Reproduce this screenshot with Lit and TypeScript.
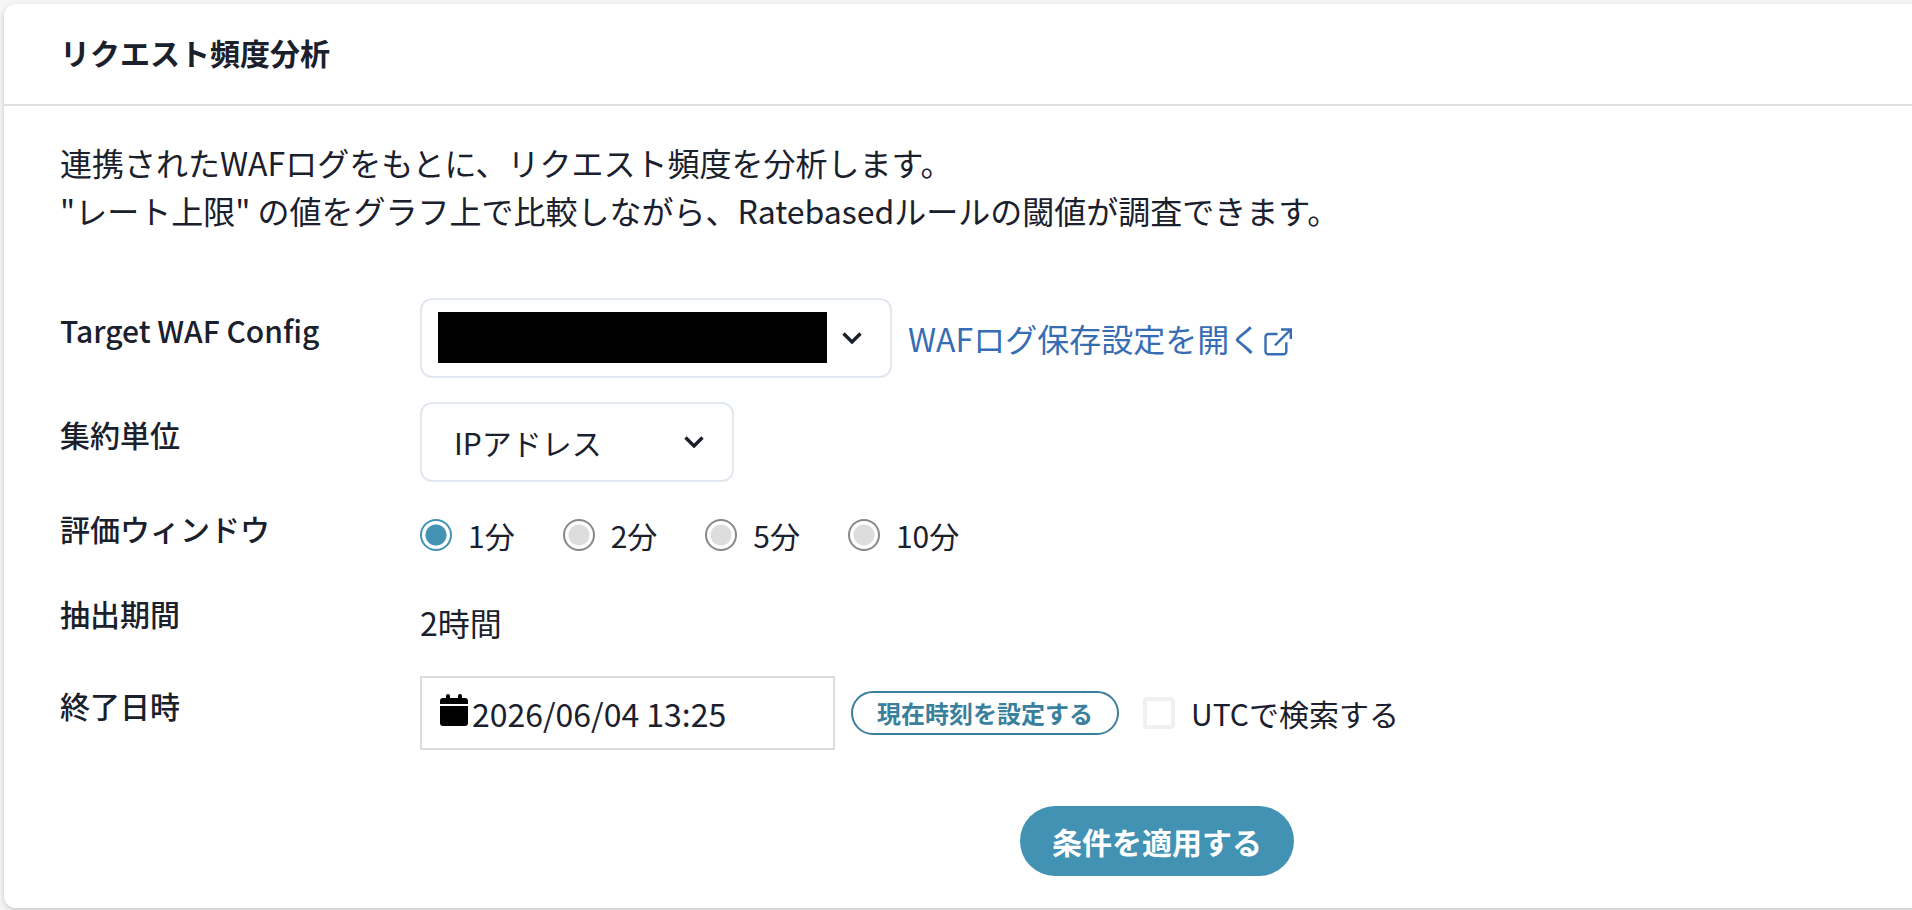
import { LitElement, html, css, svg } from "lit";
import { customElement, state } from "lit/decorators.js";

const chevron = html`<svg class="chevron" viewBox="0 0 20 12" aria-hidden="true">
  <path d="M1.5 1.5 10 10 18.5 1.5" fill="none" stroke="currentColor" stroke-width="3.4" />
</svg>`;

const calendarShapes = svg`
  <path d="M3 4H6V2A2 2 0 0 1 10 2V4H18V2A2 2 0 0 1 22 2V4H25A3 3 0 0 1 28 7V10H0V7A3 3 0 0 1 3 4Z" />
  <path d="M0 12H28V29A3 3 0 0 1 25 32H3A3 3 0 0 1 0 29Z" />`;

@customElement("app-root")
export class AppRoot extends LitElement {
  @state() private windowMinutes = 1;

  static styles = css`
    :host {
      display: block;
      box-sizing: border-box;
      min-height: 100vh;
      padding: 4px 0 2px 4px;
      overflow: hidden;
      background: #f7f7f7;
      color: #1a202c;
      font-family: "Noto Sans CJK JP", "Noto Sans", sans-serif;
      font-size: 30px;
      line-height: 45px;
    }
    * {
      box-sizing: border-box;
    }
    input,
    select,
    button {
      margin: 0;
      font: inherit;
      color: inherit;
    }
    .card {
      margin-right: -398px;
      background: #fff;
      border-radius: 12px;
      box-shadow: 0 2px 6px rgba(0, 0, 0, 0.2);
    }
    .header {
      padding: 26px 56px 29px;
      border-bottom: 2px solid #e0e0e0;
    }
    h1 {
      margin: 0;
      font-size: 30px;
      font-weight: 600;
    }
    .body {
      padding: 32px 56px;
    }
    .lead {
      margin: 0 0 64px;
      font-size: 32px;
      line-height: 48px;
    }
    .form {
      display: grid;
      grid-template-columns: 360px 1fr;
      row-gap: 24px;
      align-items: center;
    }
    .name {
      margin-bottom: 16px;
      font-weight: 500;
    }
    .controls {
      display: flex;
      align-items: center;
      gap: 16px;
    }
    .select {
      position: relative;
      display: flex;
    }
    .select select {
      width: 314px;
      height: 80px;
      padding: 0 60px 0 32px;
      appearance: none;
      border: 2px solid #e2e8f0;
      border-radius: 12px;
      background: #fff;
    }
    .select .wide {
      width: 472px;
    }
    .chevron {
      position: absolute;
      top: 34px;
      right: 30px;
      width: 20px;
      height: 12px;
      pointer-events: none;
    }
    .mask {
      position: absolute;
      top: 14px;
      left: 18px;
      width: 389px;
      height: 51px;
      background: #000;
      pointer-events: none;
    }
    a {
      display: flex;
      align-items: center;
      gap: 3px;
      color: #366db3;
      font-size: 32px;
      line-height: 48px;
      text-decoration: none;
    }
    .external {
      width: 28px;
      height: 28px;
      margin-top: 8px;
    }
    .radios {
      display: flex;
      gap: 48px;
      padding-bottom: 3px;
    }
    .choice {
      display: flex;
      align-items: center;
      gap: 16px;
    }
    input[type="radio"] {
      appearance: none;
      width: 32px;
      height: 32px;
      border: 2px solid #888;
      border-radius: 50%;
      background: radial-gradient(circle, #ddd 10px, #fff 11px);
    }
    input[type="radio"]:checked {
      border-color: #4292b4;
      background: radial-gradient(circle, #4292b4 10px, #fff 11px);
    }
    .value {
      font-size: 32px;
      line-height: 48px;
    }
    .date {
      display: flex;
      align-items: flex-start;
      gap: 4px;
      width: 415px;
      height: 74px;
      padding: 0 18px;
      border: 2px solid #ddd;
    }
    .calendar {
      flex: none;
      width: 28px;
      height: 32px;
      margin-top: 16px;
      fill: #000;
    }
    .date input {
      flex: 1;
      min-width: 0;
      height: 70px;
      padding: 0;
      border: 0;
      background: none;
      font-size: 32px;
    }
    .now {
      height: 44px;
      padding: 0 24px;
      border: 2px solid #3a7f9c;
      border-radius: 22px;
      background: #fff;
      color: #3a7f9c;
      font-size: 24px;
      font-weight: 600;
      line-height: 40px;
    }
    .utc {
      margin-left: 8px;
    }
    input[type="checkbox"] {
      appearance: none;
      width: 32px;
      height: 32px;
      border: 4px solid #f0f0f0;
      border-radius: 4px;
      background: #fff;
    }
    .actions {
      display: flex;
      justify-content: center;
      margin-top: 56px;
    }
    .apply {
      height: 70px;
      padding: 0 32px;
      border: 0;
      border-radius: 35px;
      background: #4292b4;
      color: #fff;
      font-weight: 600;
    }
  `;

  render() {
    return html`
      <section class="card">
        <header class="header"><h1>リクエスト頻度分析</h1></header>
        <div class="body">
          <p class="lead">
            連携されたWAFログをもとに、リクエスト頻度を分析します。<br />"レート上限"
            の値をグラフ上で比較しながら、Ratebasedルールの閾値が調査できます。
          </p>
          <div class="form">
            <label class="name" for="config">Target WAF Config</label>
            <div class="controls">
              <div class="select">
                <select id="config" class="wide"><option></option></select>
                <span class="mask"></span>
                ${chevron}
              </div>
              <a href="#">WAFログ保存設定を開く<svg
                  class="external"
                  viewBox="0 0 28 28"
                  fill="none"
                  stroke="currentColor"
                  stroke-width="2.4"
                  aria-hidden="true"
                >
                  <path d="M13.5 6H4.3A2.8 2.8 0 0 0 1.5 8.8V23.5A2.8 2.8 0 0 0 4.3 26.3H19.5A2.8 2.8 0 0 0 22.3 23.5V14.3" />
                  <path d="M17 1.5H26.8V11M26.8 1.5 11 17.3" />
                </svg></a>
            </div>

            <label class="name" for="unit">集約単位</label>
            <div class="controls">
              <div class="select">
                <select id="unit"><option>IPアドレス</option></select>
                ${chevron}
              </div>
            </div>

            <span class="name" id="window">評価ウィンドウ</span>
            <div class="radios" role="radiogroup" aria-labelledby="window">
              ${[1, 2, 5, 10].map(
                (minutes) => html`<label class="choice">
                  <input
                    type="radio"
                    name="window"
                    .checked=${this.windowMinutes === minutes}
                    @change=${() => (this.windowMinutes = minutes)}
                  />${minutes}分</label>`
              )}
            </div>

            <span class="name">抽出期間</span>
            <span class="value">2時間</span>

            <label class="name" for="end">終了日時</label>
            <div class="controls">
              <div class="date">
                <svg class="calendar" viewBox="0 0 28 32" aria-hidden="true">${calendarShapes}</svg>
                <input id="end" type="text" value="2026/06/04 13:25" />
              </div>
              <button class="now" type="button">現在時刻を設定する</button>
              <label class="choice utc"><input type="checkbox" />UTCで検索する</label>
            </div>
          </div>
          <div class="actions">
            <button class="apply" type="button">条件を適用する</button>
          </div>
        </div>
      </section>
    `;
  }
}
